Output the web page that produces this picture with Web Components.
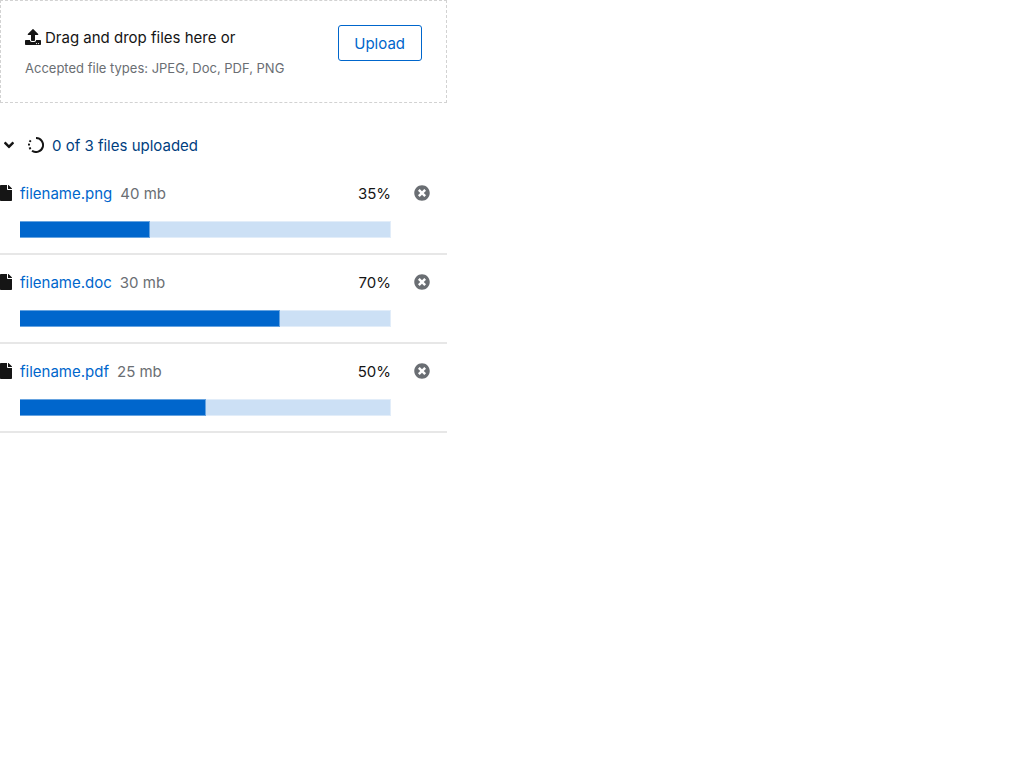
<!DOCTYPE html>
<html lang="en">
<head>
<meta charset="utf-8">
<title>Multiple file upload</title>
<style>
body{margin:0;background:#fff;color:#151515;font:15px/24px "Inter","Liberation Sans",sans-serif}
</style>
</head>
<body>
<file-upload>
  <upload-dropzone>
    <span slot="title">Drag and drop files here or</span>
    <span slot="info">Accepted file types: JPEG, Doc, PDF, PNG</span>
  </upload-dropzone>
  <upload-status>0 of 3 files uploaded</upload-status>
  <upload-item name="filename.png" size="40 mb" value="35"></upload-item>
  <upload-item name="filename.doc" size="30 mb" value="70"></upload-item>
  <upload-item name="filename.pdf" size="25 mb" value="50"></upload-item>
</file-upload>
<script>
class BaseElement extends HTMLElement {
  constructor() {
    super();
    this.attachShadow({ mode: "open" }).innerHTML = this.constructor.markup;
  }
}

customElements.define("file-upload", class extends BaseElement {
  static markup = `<style>:host{display:block;max-width:447px}</style><slot></slot>`;
});

customElements.define("upload-dropzone", class extends BaseElement {
  static markup = `
    <style>
      :host{display:flex;justify-content:space-between;align-items:flex-start;box-sizing:border-box;padding:24px;border:1px dashed #d2d2d2}
      .title{display:flex;align-items:flex-start;gap:4px;line-height:26px}
      .info{margin-top:8px;font-size:13px;line-height:19px;color:#6a6e73}
      svg{width:16px;height:16px;margin-top:4px;fill:currentColor}
      button{font:inherit;color:#06c;background:none;border:1px solid #06c;border-radius:3px;padding:6px 16px 4px 15px;cursor:pointer}
    </style>
    <div>
      <div class="title">
        <svg viewBox="0 0 512 512" aria-hidden="true"><path d="M296 384h-80c-13.300 0-24-10.700-24-24V192h-87.700c-17.800 0-26.700-21.500-14.100-34.100L242.300 5.700c7.500-7.500 19.800-7.500 27.300 0l152.200 152.200c12.600 12.600 3.700 34.100-14.100 34.100H320v168c0 13.300-10.700 24-24 24zm216-8v112c0 13.300-10.700 24-24 24H24c-13.300 0-24-10.700-24-24V376c0-13.300 10.700-24 24-24h136v8c0 30.900 25.100 56 56 56h80c30.900 0 56-25.100 56-56v-8h136c13.300 0 24 10.700 24 24zm-124 88c0-11-9-20-20-20s-20 9-20 20 9 20 20 20 20-9 20-20zm64 0c0-11-9-20-20-20s-20 9-20 20 9 20 20 20 20-9 20-20z"/></svg>
        <slot name="title"></slot>
      </div>
      <div class="info"><slot name="info"></slot></div>
    </div>
    <button type="button">Upload</button>`;
});

customElements.define("upload-status", class extends BaseElement {
  static markup = `
    <style>
      :host{display:block;padding:30px 0 7px}
      button{display:flex;align-items:flex-start;font:inherit;line-height:26px;color:#004080;background:none;border:0;padding:0 0 0 4px;cursor:pointer}
      svg{height:16px;margin-top:4px;color:#151515}
      .angle{width:10px;margin-right:14px;fill:currentColor}
      .ring{width:16px;margin-right:8px;fill:none;stroke:currentColor;stroke-width:2}
    </style>
    <button type="button" aria-expanded="true">
      <svg class="angle" viewBox="0 96 320 320" aria-hidden="true"><path d="M143 352.300L7 216.300c-9.400-9.400-9.400-24.600 0-33.900l22.600-22.600c9.400-9.400 24.600-9.400 33.900 0l96.400 96.400 96.400-96.400c9.400-9.400 24.600-9.400 33.900 0l22.600 22.600c9.400 9.400 9.400 24.600 0 33.900l-136 136c-9.200 9.400-24.400 9.400-33.800 0z"/></svg>
      <svg class="ring" viewBox="0 0 16 16" aria-hidden="true"><path d="M8 1a7 7 0 1 1-4 12.700M1.700 4.900a7 7 0 0 1 1-1.600M1 8.500a7 7 0 0 1 .1-1.900M1.600 10.400a7 7 0 0 0 .9 1.800"/></svg>
      <slot></slot>
    </button>`;
});

customElements.define("upload-item", class extends BaseElement {
  static markup = `
    <style>
      :host{display:grid;grid-template-columns:12px minmax(0,1fr) 48px;column-gap:8px;padding:16px 0 15px;border-bottom:2px solid #e7e7e7}
      .doc{width:12px;height:16px;margin-top:3px;fill:currentColor}
      .text{display:flex;gap:8px;margin-bottom:15px}
      a{color:#06c;text-decoration:none}
      .size{color:#6a6e73}
      output{margin-left:auto}
      progress{display:block;width:100%;height:17px;appearance:none;border:0;background:#cce0f5}
      progress::-webkit-progress-bar{background:#cce0f5;box-shadow:inset 0 0 0 1px #e2edf9}
      progress::-webkit-progress-value{box-sizing:border-box;background:#06c;border:solid #66a3e0;border-width:1px 1px 1px 0}
      button{justify-self:start;align-self:start;display:block;margin:3px 0 0 15px;padding:0;border:0;background:none;color:#6a6e73;cursor:pointer}
      button svg{display:block;width:16px;height:16px;fill:currentColor}
    </style>
    <svg class="doc" viewBox="0 0 384 512" aria-hidden="true"><path d="M224 136V0H24C10.700 0 0 10.700 0 24v464c0 13.300 10.700 24 24 24h336c13.300 0 24-10.700 24-24V160H248c-13.200 0-24-10.800-24-24zm160-14.100v6.100H256V0h6.100c6.400 0 12.500 2.500 17 7l97.900 98c4.500 4.500 7 10.600 7 16.900z"/></svg>
    <div>
      <div class="text"><a href="#"></a><span class="size"></span><output></output></div>
      <progress max="100"></progress>
    </div>
    <button type="button"><svg viewBox="0 0 512 512" aria-hidden="true"><path d="M256 8C119 8 8 119 8 256s111 248 248 248 248-111 248-248S393 8 256 8zm121.600 313.100c4.700 4.700 4.700 12.300 0 17L338 377.600c-4.700 4.700-12.300 4.700-17 0L256 312l-65.100 65.600c-4.700 4.700-12.300 4.700-17 0L134.400 338c-4.700-4.700-4.700-12.300 0-17l65.600-65-65.600-65.100c-4.700-4.700-4.700-12.300 0-17l39.600-39.600c4.700-4.700 12.300-4.700 17 0l65 65.700 65.100-65.600c4.700-4.700 12.300-4.700 17 0l39.600 39.600c4.700 4.700 4.700 12.300 0 17L312 256l65.600 65.100z"/></svg></button>`;
  connectedCallback() {
    const $ = s => this.shadowRoot.querySelector(s);
    const name = this.getAttribute("name"), value = this.getAttribute("value");
    $("a").textContent = name;
    $(".size").textContent = this.getAttribute("size");
    $("output").textContent = value + "%";
    $("progress").value = Number(value);
    $("progress").setAttribute("aria-label", name);
    $("button").setAttribute("aria-label", "Remove " + name);
  }
});
</script>
</body>
</html>
